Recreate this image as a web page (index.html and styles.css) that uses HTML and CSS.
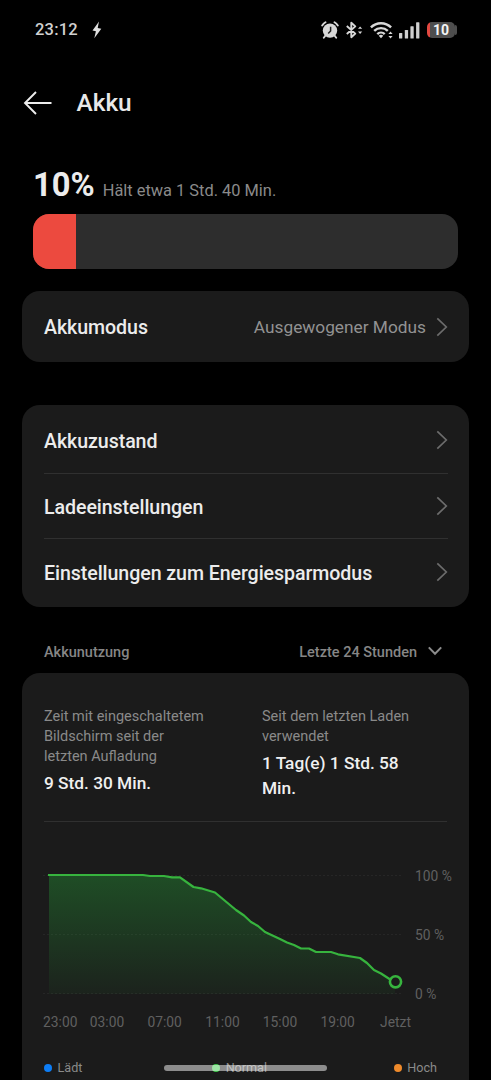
FILE: index.html
```html
<!DOCTYPE html>
<html lang="de">
<head>
<meta charset="utf-8">
<title>Akku</title>
<link rel="stylesheet" href="styles.css">
</head>
<body>
<div class="screen">
  <header class="status">
    <div class="status-left">
      <span class="clock">23:12</span>
      <svg class="bolt" width="10" height="18" viewBox="0 0 10 18"><path d="M7 .5 0.5 9.6 3.9 10.3 2.3 17.3 9.3 7.7 5.7 7.1Z" fill="#dedede"/></svg>
    </div>
    <div class="status-right">
      <svg class="alarm" width="18" height="18" viewBox="0 0 18 18"><circle cx="9" cy="9.6" r="7.200" fill="#d8d8d8"/><path d="M1.2 4.4A10 10 0 0 1 4.5 1.200M16.800 4.400A10 10 0 0 0 13.500 1.200M4.3 14.8 2.8 16.8M13.7 14.8 15.2 16.8" stroke="#d8d8d8" stroke-width="1.9" stroke-linecap="round" fill="none"/><path d="M9.6 5.8V10L7.200 12.600" stroke="#222" stroke-width="1.5" fill="none"/></svg>
      <svg class="bt" width="17" height="18" viewBox="0 0 17 18"><path d="M.8 5 9.300 12.600 5.300 16.200V1.800L9.300 5.400.8 13" stroke="#d8d8d8" stroke-width="1.9" fill="none" stroke-linejoin="round"/><path d="M12 7.800 14.100 5.400 16.200 7.800ZM12 10.500 14.100 12.900 16.200 10.500Z" fill="#d8d8d8"/></svg>
      <svg class="wifi" width="24" height="18" viewBox="0 0 24 18"><g fill="none" stroke="#d8d8d8" stroke-width="2.400"><path d="M.9 6.400A14.300 14.300 0 0 1 21.100 6.400"/><path d="M4.2 9.900A9.800 9.800 0 0 1 17.800 9.900"/><path d="M7.3 13.100A5.300 5.300 0 0 1 14.700 13.100"/></g><path d="M8.700 14.700Q11 12.700 13.300 14.700L11 17.200Z" fill="#d8d8d8"/><path d="M18.400 13 20.500 10.600 22.600 13ZM18.400 15 20.500 17.400 22.600 15Z" fill="#d8d8d8"/></svg>
      <svg class="signal" width="21" height="17" viewBox="0 0 21 17"><g fill="#d0d0d0"><rect x="0" y="11" width="3.3" height="5.6" rx=".6"/><rect x="5.8" y="8" width="3.3" height="8.6" rx=".6"/><rect x="11.4" y="4.2" width="3.3" height="12.4" rx=".6"/><rect x="17.1" y=".2" width="3.3" height="16.4" rx=".6"/></g></svg>
      <div class="battery"><span>10</span></div><i class="battery-tip"></i>
    </div>
  </header>

  <div class="title-bar">
    <svg width="30" height="26" viewBox="0 0 30 26"><path d="M13 2 2 13 13 24M2 13H28.5" fill="none" stroke="#ededed" stroke-width="1.9"/></svg>
    <h1>Akku</h1>
  </div>

  <div class="level">
    <span class="percent">10%</span>
    <span class="remaining">Hält etwa 1 Std. 40 Min.</span>
  </div>
  <div class="level-bar"><div class="level-fill" style="width:10%"></div></div>

  <section class="card mode">
    <span class="label">Akkumodus</span>
    <span class="value">Ausgewogener Modus</span>
    <svg class="chev" width="12" height="20" viewBox="0 0 12 20"><path d="M1.3 1.3 10.3 10 1.3 18.7"/></svg>
  </section>

  <section class="card list">
    <div class="row"><span class="label">Akkuzustand</span><svg class="chev" width="12" height="20" viewBox="0 0 12 20"><path d="M1.3 1.3 10.3 10 1.3 18.7"/></svg></div>
    <div class="row"><span class="label">Ladeeinstellungen</span><svg class="chev" width="12" height="20" viewBox="0 0 12 20"><path d="M1.3 1.3 10.3 10 1.3 18.7"/></svg></div>
    <div class="row"><span class="label">Einstellungen zum Energiesparmodus</span><svg class="chev" width="12" height="20" viewBox="0 0 12 20"><path d="M1.3 1.3 10.3 10 1.3 18.7"/></svg></div>
  </section>

  <div class="usage-head">
    <span>Akkunutzung</span>
    <span class="range">Letzte 24 Stunden <svg width="16" height="10" viewBox="0 0 16 10"><path d="M1.8 1.4 8 7.8 14.2 1.4" fill="none" stroke="#8c8c8c" stroke-width="2"/></svg></span>
  </div>

  <section class="card usage">
    <div class="stats">
      <div class="stat"><p>Zeit mit eingeschaltetem<br>Bildschirm seit der<br>letzten Aufladung</p><strong>9 Std. 30 Min.</strong></div>
      <div class="stat"><p>Seit dem letzten Laden<br>verwendet</p><strong>1 Tag(e) 1 Std. 58<br>Min.</strong></div>
    </div>
    <svg class="chart" width="447" height="190" viewBox="22 850 447 190">
      <defs><linearGradient id="area" x1="0" y1="875" x2="0" y2="994" gradientUnits="userSpaceOnUse"><stop offset="0" stop-color="#27b83c" stop-opacity=".32"/><stop offset="1" stop-color="#27b83c" stop-opacity=".05"/></linearGradient></defs>
      <path d="M43 875.5H402M43 934.5H402M43 993.5H402" stroke="#262626" stroke-dasharray="2 2"/>
      <path d="M49 875H143L150 876H164L172 877.3H180L193.500 887L201 888.300L215 892.500L236 910L244 915.500L251 922L258 926L265 932L280 939L287 942.500L294 945L301 948.500H309L316 952H331L338 954.300L360 958L367 963L374 970L381 973.500L388 978L395 982V994H49Z" fill="url(#area)"/>
      <path d="M48 875H143L150 876H164L172 877.3H180L193.500 887L201 888.300L215 892.500L236 910L244 915.500L251 922L258 926L265 932L280 939L287 942.500L294 945L301 948.500H309L316 952H331L338 954.300L360 958L367 963L374 970L381 973.500L391 980" fill="none" stroke="#37b43e" stroke-width="2.200" stroke-linejoin="round"/>
      <circle cx="395.500" cy="981.800" r="5.600" fill="#1b1b1b" stroke="#37b43e" stroke-width="2.600"/>
      <g class="axis">
        <text x="415" y="881">100 %</text><text x="415" y="940">50 %</text><text x="415" y="999.400">0 %</text>
        <g text-anchor="middle"><text x="60.300" y="1026.500">23:00</text><text x="107" y="1026.500">03:00</text><text x="164.700" y="1026.500">07:00</text><text x="222.500" y="1026.500">11:00</text><text x="280" y="1026.500">15:00</text><text x="337.700" y="1026.500">19:00</text><text x="395.500" y="1026.500">Jetzt</text></g>
      </g>
    </svg>
    <div class="legend">
      <span><i class="dot charging"></i>Lädt</span>
      <span><i class="dot normal"></i>Normal</span>
      <span><i class="dot high"></i>Hoch</span>
    </div>
  </section>
  <div class="home-indicator"></div>
</div>
</body>
</html>
```
FILE: styles.css
```css
* { box-sizing: border-box; }
body { margin: 0; background: #000; font-family: Roboto, sans-serif; color: #ececec; }
.screen { position: relative; width: 491px; height: 1080px; overflow: hidden; background: #000; }

.status { height: 60px; padding: 0 34px 0 35px; display: flex; justify-content: space-between; align-items: center; }
.status-left, .status-right { display: flex; align-items: center; }
.clock { margin-top: -1px; font-size: 16.500px; font-weight: 500; color: #d0d0d0; letter-spacing: .2px; }
.bolt { margin-left: 14px; }
.alarm { margin-right: 7px; }
.bt { margin-right: 7px; }
.wifi { margin-right: 5px; }
.signal { margin-right: 7px; }
.battery { width: 28px; height: 16px; border-radius: 5px; background: linear-gradient(90deg, #e34840 0 3px, #4e4e4e 3px); font-size: 14px; line-height: 16.500px; font-weight: 700; text-align: center; color: #f4f4f4; }
.battery-tip { width: 2px; height: 10px; border-radius: 0 2px 2px 0; background: #4e4e4e; }

.title-bar { height: 85px; padding-left: 23px; display: flex; align-items: center; gap: 23.500px; }
h1 { margin: 1px 0 0; font-size: 24.400px; line-height: 30px; font-weight: 500; color: #e8e8e8; }

.level { height: 69px; padding: 20px 33px 0; display: flex; align-items: baseline; gap: 8px; }
.percent { font-size: 32.700px; line-height: 40px; font-weight: 700; }
.remaining { font-size: 16.400px; color: #8a8a8a; }
.level-bar { height: 55px; margin: 0 33px; border-radius: 16px; overflow: hidden; background: #2d2d2d; }
.level-fill { height: 100%; background: #ec4a3f; }

.card { margin: 0 22px; background: #1b1b1b; border-radius: 18px; }
.label { flex: 1; padding-top: 3px; font-size: 19.600px; font-weight: 500; line-height: 24px; letter-spacing: -.07px; }
.chev { fill: none; stroke: #6c6c6c; stroke-width: 1.7; }
.mode { margin-top: 22px; height: 71px; padding: 0 21px 0 22px; display: flex; align-items: center; }
.value { margin-right: 10px; padding-top: 1px; font-size: 17.300px; color: #929292; }
.list { margin-top: 43px; height: 202px; padding: 3px 21px 2px 22px; }
.row { height: 65.700px; display: flex; align-items: center; border-bottom: 1px solid #303030; }
.row:last-child { border-bottom: 0; }

.usage-head { height: 66px; padding: 24px 48px 0 44px; display: flex; align-items: center; justify-content: space-between; font-size: 14.500px; font-weight: 500; color: #868686; }
.range { display: flex; align-items: center; gap: 10px; }
.range svg { margin-top: -3px; }

.usage { height: 430px; padding-top: 34px; border-radius: 18px 18px 0 0; }
.stats { height: 115px; margin: 0 22px; display: grid; grid-template-columns: 218px 1fr; border-bottom: 1px solid #303030; }
.stat p { margin: 0; font-size: 14.500px; line-height: 20px; color: #8a8a8a; }
.stat strong { display: block; margin-top: 4px; font-size: 17.300px; line-height: 25px; font-weight: 500; color: #f0f0f0; }
.chart { display: block; margin-top: 28px; }
.axis text { font-size: 13.800px; fill: #606060; }
.legend { margin: 18px 32px 0 22px; display: flex; justify-content: space-between; font-size: 12.600px; line-height: 20px; color: #8a8a8a; }
.legend span { display: flex; align-items: center; }
.dot { width: 8px; height: 8px; margin-right: 5.500px; border-radius: 50%; }
.legend span:nth-child(2) { margin-left: 3px; }
.charging { background: #0d7df5; }
.normal { background: #3fca4c; }
.high { background: #ee8a2b; }
.home-indicator { position: absolute; left: 164px; top: 1065px; width: 163px; height: 6px; border-radius: 3px; background: rgba(255, 255, 255, .5); }
```
